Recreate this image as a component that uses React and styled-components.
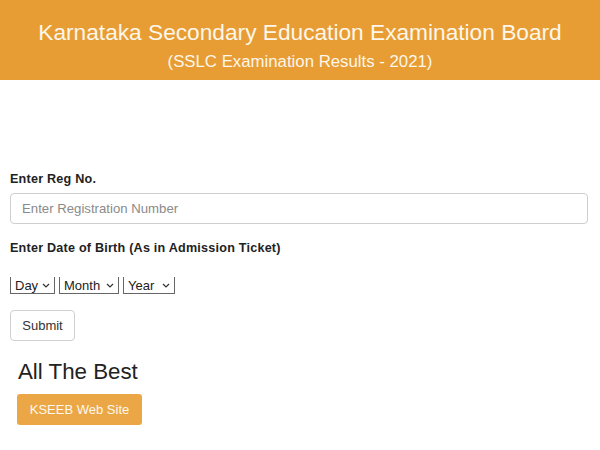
import React, { useState } from "react";
import styled, { createGlobalStyle } from "styled-components";

const GlobalStyle = createGlobalStyle`
  body {
    margin: 0;
    background: #ffffff;
    font-family: "Liberation Sans", Arial, sans-serif;
  }
`;

const Header = styled.header`
  background-color: #e79d33;
  color: #fdf6ea;
  text-align: center;
  height: 80px;
  padding-top: 18px;
  box-sizing: border-box;
  h1 {
    margin: 0;
    font-size: 22.7px;
    font-weight: normal;
    line-height: 28px;
  }
  p {
    margin: 6px 0 0;
    font-size: 16.8px;
    line-height: 20px;
  }
`;

const Form = styled.form`
  padding: 92px 12px 0 10px;
`;

const Label = styled.label`
  display: block;
  font-size: 12.6px;
  font-weight: bold;
  letter-spacing: 0.22px;
  color: #222;
  margin-bottom: 7px;
`;

const TextInput = styled.input`
  display: block;
  width: 100%;
  box-sizing: border-box;
  height: 31px;
  padding: 0 11px;
  border: 1px solid #cfcfcf;
  border-radius: 4px;
  font-family: inherit;
  font-size: 13.2px;
  color: #333;
  margin-bottom: 17px;
  &::placeholder {
    color: #8a8a8a;
  }
`;

const SelectRow = styled.div`
  display: flex;
  gap: 4px;
  margin-top: 22px;
  margin-bottom: 16px;
`;

const Select = styled.select`
  font-family: inherit;
  font-size: 13px;
  color: #222;
  height: 17px;
  padding: 0 14px 0 4px;
  background: #fff;
  border: 1px solid #666;
  border-top: none;
  border-radius: 0;
  appearance: none;
  background-image: url("data:image/svg+xml,%3Csvg xmlns='http://www.w3.org/2000/svg' width='8' height='5'%3E%3Cpath d='M1 1l3 3 3-3' fill='none' stroke='%23333' stroke-width='1.2'/%3E%3C/svg%3E");
  background-repeat: no-repeat;
  background-position: right 4px center;
`;

const SubmitButton = styled.button`
  font-family: inherit;
  font-size: 13px;
  color: #333;
  background: #fff;
  border: 1px solid #d0d0d0;
  border-radius: 4px;
  width: 65px;
  height: 31px;
`;

const Footer = styled.div`
  padding: 18px 17px 0;
  h2 {
    margin: 0 0 9px 1px;
    font-size: 22.3px;
    font-weight: normal;
    color: #222;
    line-height: 26px;
  }
`;

const SiteButton = styled.a`
  display: inline-flex;
  align-items: center;
  justify-content: center;
  width: 125px;
  height: 31px;
  background: #eba746;
  color: #fff8ee;
  font-size: 13px;
  border-radius: 3px;
  text-decoration: none;
`;

const days = ["Day", ...Array.from({ length: 31 }, (_, i) => String(i + 1))];
const months = ["Month", "Jan", "Feb", "Mar", "Apr", "May", "Jun", "Jul", "Aug", "Sep", "Oct", "Nov", "Dec"];
const years = ["Year", ...Array.from({ length: 10 }, (_, i) => String(2001 + i))];

const App = () => {
  const [regNo, setRegNo] = useState("");

  return (
    <>
      <GlobalStyle />
      <Header>
        <h1>Karnataka Secondary Education Examination Board</h1>
        <p>(SSLC Examination Results - 2021)</p>
      </Header>
      <Form onSubmit={(e) => e.preventDefault()}>
        <Label htmlFor="reg">Enter Reg No.</Label>
        <TextInput
          id="reg"
          placeholder="Enter Registration Number"
          value={regNo}
          onChange={(e) => setRegNo(e.target.value)}
        />
        <Label>Enter Date of Birth (As in Admission Ticket)</Label>
        <SelectRow>
          <Select style={{ width: 45 }}>
            {days.map((d) => (
              <option key={d}>{d}</option>
            ))}
          </Select>
          <Select style={{ width: 60 }}>
            {months.map((m) => (
              <option key={m}>{m}</option>
            ))}
          </Select>
          <Select style={{ width: 52 }}>
            {years.map((y) => (
              <option key={y}>{y}</option>
            ))}
          </Select>
        </SelectRow>
        <SubmitButton type="submit">Submit</SubmitButton>
      </Form>
      <Footer>
        <h2>All The Best</h2>
        <SiteButton href="#">KSEEB Web Site</SiteButton>
      </Footer>
    </>
  );
};

export default App;
